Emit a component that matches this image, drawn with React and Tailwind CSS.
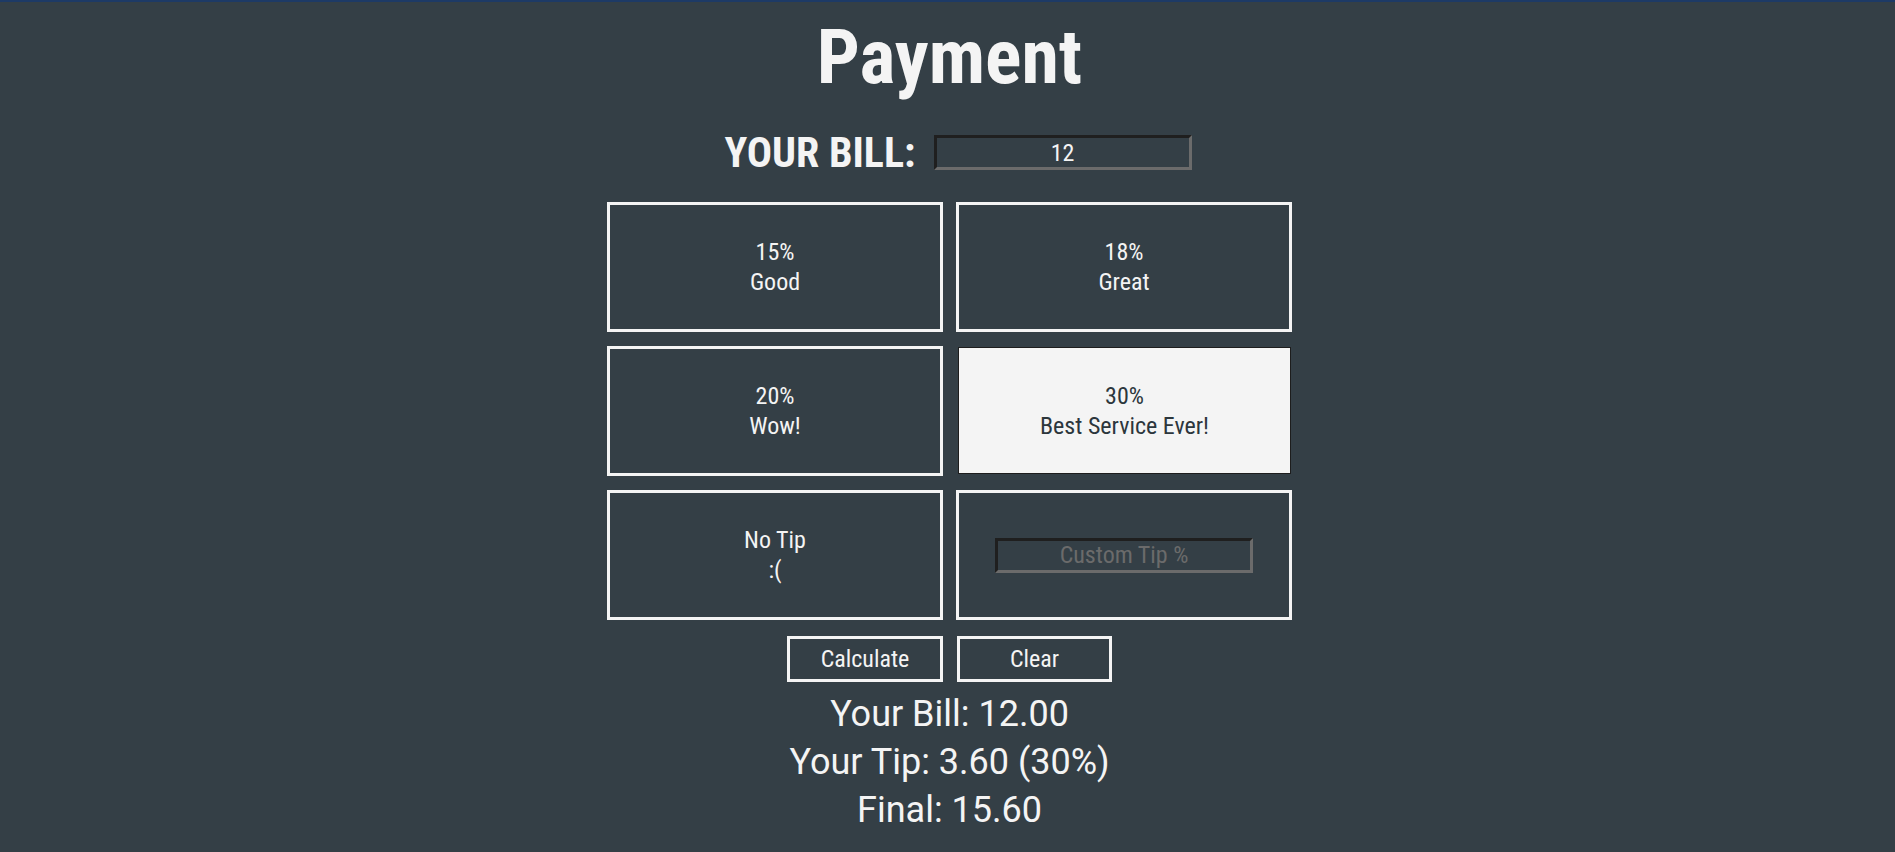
import React, { useState } from 'react';

const tips = [
  { pct: '15%', label: 'Good' },
  { pct: '18%', label: 'Great' },
  { pct: '20%', label: 'Wow!' },
  { pct: '30%', label: 'Best Service Ever!' },
  { pct: 'No Tip', label: ':(' },
];

const font = { fontFamily: '"Roboto Condensed", Roboto, "Liberation Sans", sans-serif' };

const TipButton = ({ tip, active, onClick }) => (
  <div
    onClick={onClick}
    className={`flex flex-col items-center justify-center text-[24px] leading-[30px] cursor-pointer ${
      active
        ? 'bg-[#f4f4f4] text-[#2c363c] border border-[#1d1d1d] mt-px ml-[2px] mr-px mb-[2px]'
        : 'border-[3px] border-[#f4f4f4]'
    }`}
  >
    <span>{tip.pct}</span>
    <span>{tip.label}</span>
  </div>
);

export default function App() {
  const [bill, setBill] = useState('12');
  const [selected, setSelected] = useState(3);

  return (
    <div
      className="min-h-screen bg-[#343f46] border-t-2 border-[#1d3a66] text-[#f4f4f4] pl-[4px] [font-stretch:condensed]"
      style={font}
    >
      <h1 className="text-center text-[76px] leading-[90px] font-bold mt-[10px]">Payment</h1>

      <div className="flex justify-center items-center gap-[18px] h-[49px] mt-[26px] pl-[17px]">
        <span className="text-[42px] font-bold">YOUR BILL:</span>
        <input
          value={bill}
          onChange={(e) => setBill(e.target.value)}
          className="w-[258px] h-[35px] bg-transparent text-center text-[24px] text-[#f4f4f4] outline-none border-[3px] border-t-[#1f1f1f] border-l-[#1f1f1f] border-b-[#6b6b6b] border-r-[#6b6b6b]"
        />
      </div>

      <div className="w-[685px] mx-auto mt-[25px] grid grid-cols-2 grid-rows-[130px_130px_130px] gap-x-[13px] gap-y-[14px]">
        {tips.map((t, i) => (
          <TipButton key={t.pct} tip={t} active={selected === i} onClick={() => setSelected(i)} />
        ))}
        <div className="border-[3px] border-[#f4f4f4] flex items-center justify-center">
          <input
            placeholder="Custom Tip %"
            className="w-[258px] h-[35px] bg-transparent text-center text-[24px] text-[#f4f4f4] placeholder-[#6b6b6b] outline-none border-[3px] border-t-[#1f1f1f] border-l-[#1f1f1f] border-b-[#6b6b6b] border-r-[#6b6b6b]"
          />
        </div>
      </div>

      <div className="flex justify-center gap-[14px] mt-[16px]">
        <button className="w-[156px] h-[46px] border-[3px] border-[#f4f4f4] text-[24px]">Calculate</button>
        <button className="w-[155px] h-[46px] border-[3px] border-[#f4f4f4] text-[24px]">Clear</button>
      </div>

      <div
        className="text-center text-[36px] leading-[48px] mt-[8px] [font-stretch:normal]"
        style={{ fontFamily: 'Roboto, "Liberation Sans", sans-serif' }}
      >
        <p>Your Bill: 12.00</p>
        <p>Your Tip: 3.60 (30%)</p>
        <p>Final: 15.60</p>
      </div>
    </div>
  );
}
